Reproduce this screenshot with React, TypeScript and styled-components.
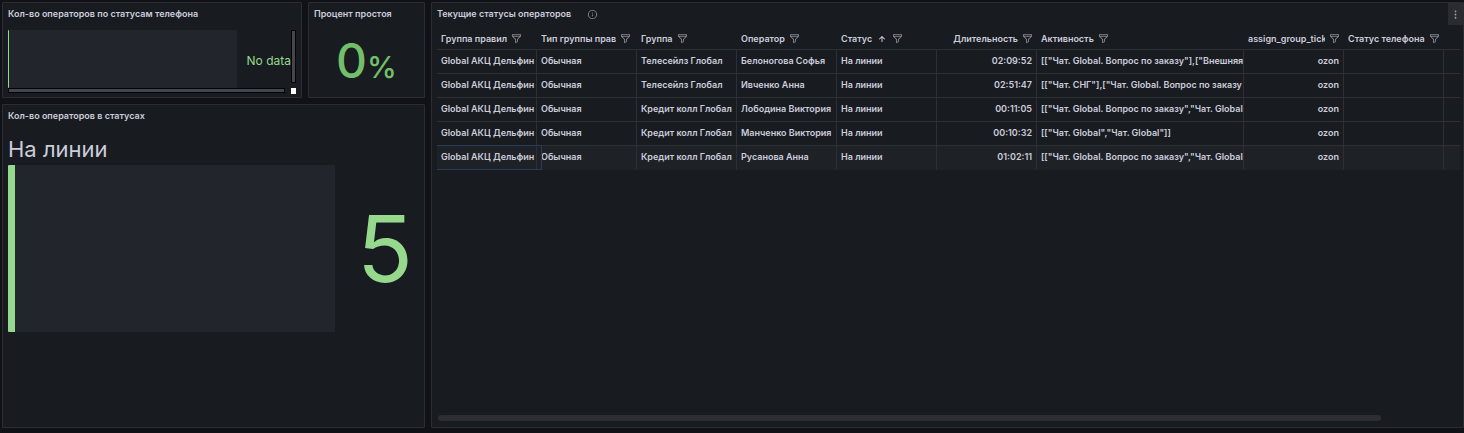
import React from "react";
import styled, { createGlobalStyle, css } from "styled-components";

const color = {
  canvas: "#111217",
  panel: "#181b1f",
  border: "#2b2d32",
  line: "#2d2f34",
  text: "#ccccdc",
  muted: "#85868f",
  track: "#22252b",
  lightGreen: "#96d98d",
  green: "#73bf69",
};

const GlobalStyle = createGlobalStyle`
  *, *::before, *::after { box-sizing: border-box; }
  body {
    margin: 0;
    background: ${color.canvas};
    color: ${color.text};
    font-family: Inter, "Liberation Sans", sans-serif;
    font-size: 9px;
    line-height: 16px;
  }
`;

const Dashboard = styled.main`
  display: grid;
  grid-template-columns: 423fr 1033fr;
  gap: 6px;
  min-height: 100vh;
  padding: 2px 0 5px 2px;
`;

const Side = styled.div`
  display: grid;
  grid-template-columns: 300fr 117fr;
  grid-template-rows: 96px 1fr;
  gap: 6px;
  min-width: 0;
`;

const Panel = styled.section<{ $wide?: boolean }>`
  display: flex;
  flex-direction: column;
  min-width: 0;
  background: ${color.panel};
  border: 1px solid ${color.border};
  border-radius: 1px;
  ${(p) => p.$wide && css`grid-column: 1 / -1;`}
`;

const PanelHeader = styled.header`
  flex: none;
  display: flex;
  align-items: center;
  gap: 16px;
  height: 22px;
  padding-left: 5px;
  white-space: nowrap;
`;

const PanelTitle = styled.h2`
  margin: 0;
  font-size: 9px;
  font-weight: 600;
`;

const MenuButton = styled.button`
  display: flex;
  align-items: center;
  justify-content: center;
  width: 15px;
  height: 22px;
  margin-left: auto;
  padding: 0;
  border: 0;
  background: #2a2c31;
  color: #9fa0a9;
`;

const Icon = styled.svg<{ $size: number }>`
  flex: none;
  display: block;
  width: ${(p) => p.$size}px;
  height: ${(p) => p.$size}px;
  fill: currentColor;
`;

const InfoButton = styled.button`
  padding: 0;
  border: 0;
  background: none;
  color: ${color.muted};
`;

const ScrollArea = styled.div`
  flex: 1;
  display: grid;
  grid-template-columns: 1fr 6px;
  grid-template-rows: 58px 6px;
  padding: 5px 4px 3px 5px;
`;

const PhoneGauge = styled.div`
  display: flex;
  align-items: center;
  gap: 10px;
  color: ${color.lightGreen};
  font-size: 12px;
  white-space: nowrap;
`;

const PhoneValue = styled.span`
  padding-top: 4px;
`;

const Track = styled.div<{ $bar: number }>`
  flex: 1;
  align-self: stretch;
  border-left: ${(p) => p.$bar}px solid ${color.lightGreen};
  border-radius: 1px;
  background: ${color.track};
`;

const ScrollThumb = styled.div<{ $vertical?: boolean }>`
  border: 1px solid #050507;
  background: #45444f;
  ${(p) =>
    p.$vertical
      ? css`width: 5px; height: 53px;`
      : css`height: 5px; margin-right: 6px;`}
`;

const ScrollCorner = styled.div`
  width: 5px;
  height: 6px;
  background: #fff;
`;

const Percent = styled.div`
  flex: 1;
  display: flex;
  align-items: baseline;
  justify-content: center;
  color: ${color.green};
  font-size: 48px;
  font-weight: 500;
  line-height: 72px;
`;

const PercentSign = styled.span`
  font-size: 30px;
`;

const StatusBody = styled.div`
  padding: 9px 11px 5px 5px;
`;

const StatusName = styled.div`
  font-size: 22px;
  line-height: 26px;
  height: 29px;
`;

const StatusGauge = styled.div`
  display: flex;
  align-items: center;
  gap: 22px;
  height: 167px;
  color: ${color.lightGreen};
  font-size: 92px;
  line-height: 92px;
`;

const TableArea = styled.div`
  flex: 1;
  display: flex;
  flex-direction: column;
  justify-content: space-between;
  padding: 3px 3px 6px 5px;
`;

const Table = styled.table`
  width: 100%;
  table-layout: fixed;
  border-collapse: separate;
  border-spacing: 0;
`;

const Column = styled.col<{ $width?: number }>`
  width: ${(p) => (p.$width ? `${p.$width}px` : "auto")};
`;

const HeadCell = styled.th`
  height: 22px;
  padding: 0 4px;
  border-bottom: 1px solid ${color.line};
  font-weight: 600;
  text-align: left;
`;

const HeadContent = styled.div<{ $end?: boolean }>`
  display: flex;
  align-items: center;
  justify-content: ${(p) => (p.$end ? "flex-end" : "flex-start")};
  gap: 4px;
  white-space: nowrap;
`;

const HeadLabel = styled.span`
  min-width: 0;
  overflow: hidden;
`;

const FilterButton = styled.button`
  flex: none;
  padding: 0;
  border: 0;
  background: none;
  color: ${color.muted};
`;

const Cell = styled.td<{ $end?: boolean }>`
  height: 24px;
  padding: 0 4px 2px;
  overflow: hidden;
  border-right: 1px solid ${color.line};
  border-bottom: 1px solid ${color.line};
  font-weight: 600;
  text-align: ${(p) => (p.$end ? "right" : "left")};
  white-space: nowrap;
  &:last-child { border-right: 0; }
`;

const Row = styled.tr`
  &:last-child ${Cell} {
    background: #1e2125;
    border-bottom-color: #1e2125;
  }
  &:last-child ${Cell}:first-child {
    position: relative;
    overflow: visible;
  }
  &:last-child ${Cell}:first-child::after {
    content: "";
    position: absolute;
    inset: -1px -6px -1px 0;
    border: 1px solid #2a3b5e;
    border-left: 0;
  }
`;

const TableScrollbar = styled.div`
  height: 6px;
  margin: 0 79px 0 1px;
  border-radius: 3px;
  background: #2c2e33;
`;

const FILTER =
  "M19,2H5A3,3,0,0,0,2,5V6.17a3,3,0,0,0,.25,1.2l0,.06a2.81,2.81,0,0,0,.59.86L9,14.41V21a1,1,0,0,0,.47.85A1,1,0,0,0,10,22a1,1,0,0,0,.45-.11l4-2A1,1,0,0,0,15,19V14.41l6.12-6.12a2.81,2.81,0,0,0,.59-.86l0-.06A3,3,0,0,0,22,6.17V5A3,3,0,0,0,19,2ZM13.29,13.29A1,1,0,0,0,13,14v4.38l-2,1V14a1,1,0,0,0-.29-.71L5.41,8H18.59ZM20,6H4V5A1,1,0,0,1,5,4H19a1,1,0,0,1,1,1Z";
const INFO =
  "M12,2A10,10,0,1,0,22,12,10,10,0,0,0,12,2Zm0,18a8,8,0,1,1,8-8A8,8,0,0,1,12,20Zm0-8.5a1,1,0,0,0-1,1v3a1,1,0,0,0,2,0v-3A1,1,0,0,0,12,11.5Zm0-4a1.25,1.25,0,1,0,1.25,1.25A1.25,1.25,0,0,0,12,7.5Z";
const ARROW_UP =
  "M17.71,11.29l-5-5a1,1,0,0,0-.33-.21,1,1,0,0,0-.76,0,1,1,0,0,0-.33.21l-5,5a1,1,0,0,0,1.42,1.42L11,9.41V17a1,1,0,0,0,2,0V9.41l3.29,3.3a1,1,0,0,0,1.42,0A1,1,0,0,0,17.71,11.29Z";
const DOTS =
  "M12,7a2,2,0,1,0-2-2A2,2,0,0,0,12,7Zm0,10a2,2,0,1,0,2,2A2,2,0,0,0,12,17Zm0-7a2,2,0,1,0,2,2A2,2,0,0,0,12,10Z";

const Glyph = ({ d, size }: { d: string; size: number }) => (
  <Icon $size={size} viewBox="0 0 24 24" aria-hidden="true">
    <path d={d} />
  </Icon>
);

type ColumnDef = { label: string; width?: number; end?: boolean; sorted?: boolean };

const columns: ColumnDef[] = [
  { label: "Группа правил", width: 100 },
  { label: "Тип группы прав", width: 100 },
  { label: "Группа", width: 100 },
  { label: "Оператор", width: 100 },
  { label: "Статус", width: 100, sorted: true },
  { label: "Длительность", width: 100, end: true },
  { label: "Активность" },
  { label: "assign_group_ticket", width: 100, end: true },
  { label: "Статус телефона", width: 100 },
];

const rows = [
  ["Телесейлз Глобал", "Белоногова Софья", "02:09:52", '[["Чат. Global. Вопрос по заказу"],["Внешняя'],
  ["Телесейлз Глобал", "Ивченко Анна", "02:51:47", '[["Чат. СНГ"],["Чат. Global. Вопрос по заказу'],
  ["Кредит колл Глобал", "Лободина Виктория", "00:11:05", '[["Чат. Global. Вопрос по заказу","Чат. Global'],
  ["Кредит колл Глобал", "Манченко Виктория", "00:10:32", '[["Чат. Global","Чат. Global"]]'],
  ["Кредит колл Глобал", "Русанова Анна", "01:02:11", '[["Чат. Global. Вопрос по заказу","Чат. Global'],
].map(([group, name, time, activity]) => [
  "Global АКЦ Дельфин", "Обычная", group, name, "На линии", time, activity, "ozon", "",
]);

export default function App() {
  return (
    <>
      <GlobalStyle />
      <Dashboard>
        <Side>
          <Panel>
            <PanelHeader>
              <PanelTitle>Кол-во операторов по статусам телефона</PanelTitle>
            </PanelHeader>
            <ScrollArea>
              <PhoneGauge>
                <Track $bar={1} />
                <PhoneValue>No data</PhoneValue>
              </PhoneGauge>
              <ScrollThumb $vertical />
              <ScrollThumb />
              <ScrollCorner />
            </ScrollArea>
          </Panel>
          <Panel>
            <PanelHeader>
              <PanelTitle>Процент простоя</PanelTitle>
            </PanelHeader>
            <Percent>
              0<PercentSign>%</PercentSign>
            </Percent>
          </Panel>
          <Panel $wide>
            <PanelHeader>
              <PanelTitle>Кол-во операторов в статусах</PanelTitle>
            </PanelHeader>
            <StatusBody>
              <StatusName>На линии</StatusName>
              <StatusGauge>
                <Track $bar={7} />
                5
              </StatusGauge>
            </StatusBody>
          </Panel>
        </Side>
        <Panel>
          <PanelHeader>
            <PanelTitle>Текущие статусы операторов</PanelTitle>
            <InfoButton aria-label="Описание панели">
              <Glyph d={INFO} size={11} />
            </InfoButton>
            <MenuButton aria-label="Меню панели">
              <Glyph d={DOTS} size={11} />
            </MenuButton>
          </PanelHeader>
          <TableArea>
            <Table>
              <colgroup>
                {columns.map((c) => (
                  <Column key={c.label} $width={c.width} />
                ))}
                <Column $width={16} />
              </colgroup>
              <thead>
                <tr>
                  {columns.map((c) => (
                    <HeadCell key={c.label} scope="col" aria-sort={c.sorted ? "ascending" : undefined}>
                      <HeadContent $end={c.end}>
                        <HeadLabel>{c.label}</HeadLabel>
                        {c.sorted && <Glyph d={ARROW_UP} size={12} />}
                        <FilterButton aria-label={`Фильтр: ${c.label}`}>
                          <Glyph d={FILTER} size={11} />
                        </FilterButton>
                      </HeadContent>
                    </HeadCell>
                  ))}
                  <HeadCell as="td" />
                </tr>
              </thead>
              <tbody>
                {rows.map((row) => (
                  <Row key={row[3]}>
                    {row.map((value, i) => (
                      <Cell key={columns[i].label} $end={columns[i].end}>
                        {value}
                      </Cell>
                    ))}
                    <Cell />
                  </Row>
                ))}
              </tbody>
            </Table>
            <TableScrollbar />
          </TableArea>
        </Panel>
      </Dashboard>
    </>
  );
}
